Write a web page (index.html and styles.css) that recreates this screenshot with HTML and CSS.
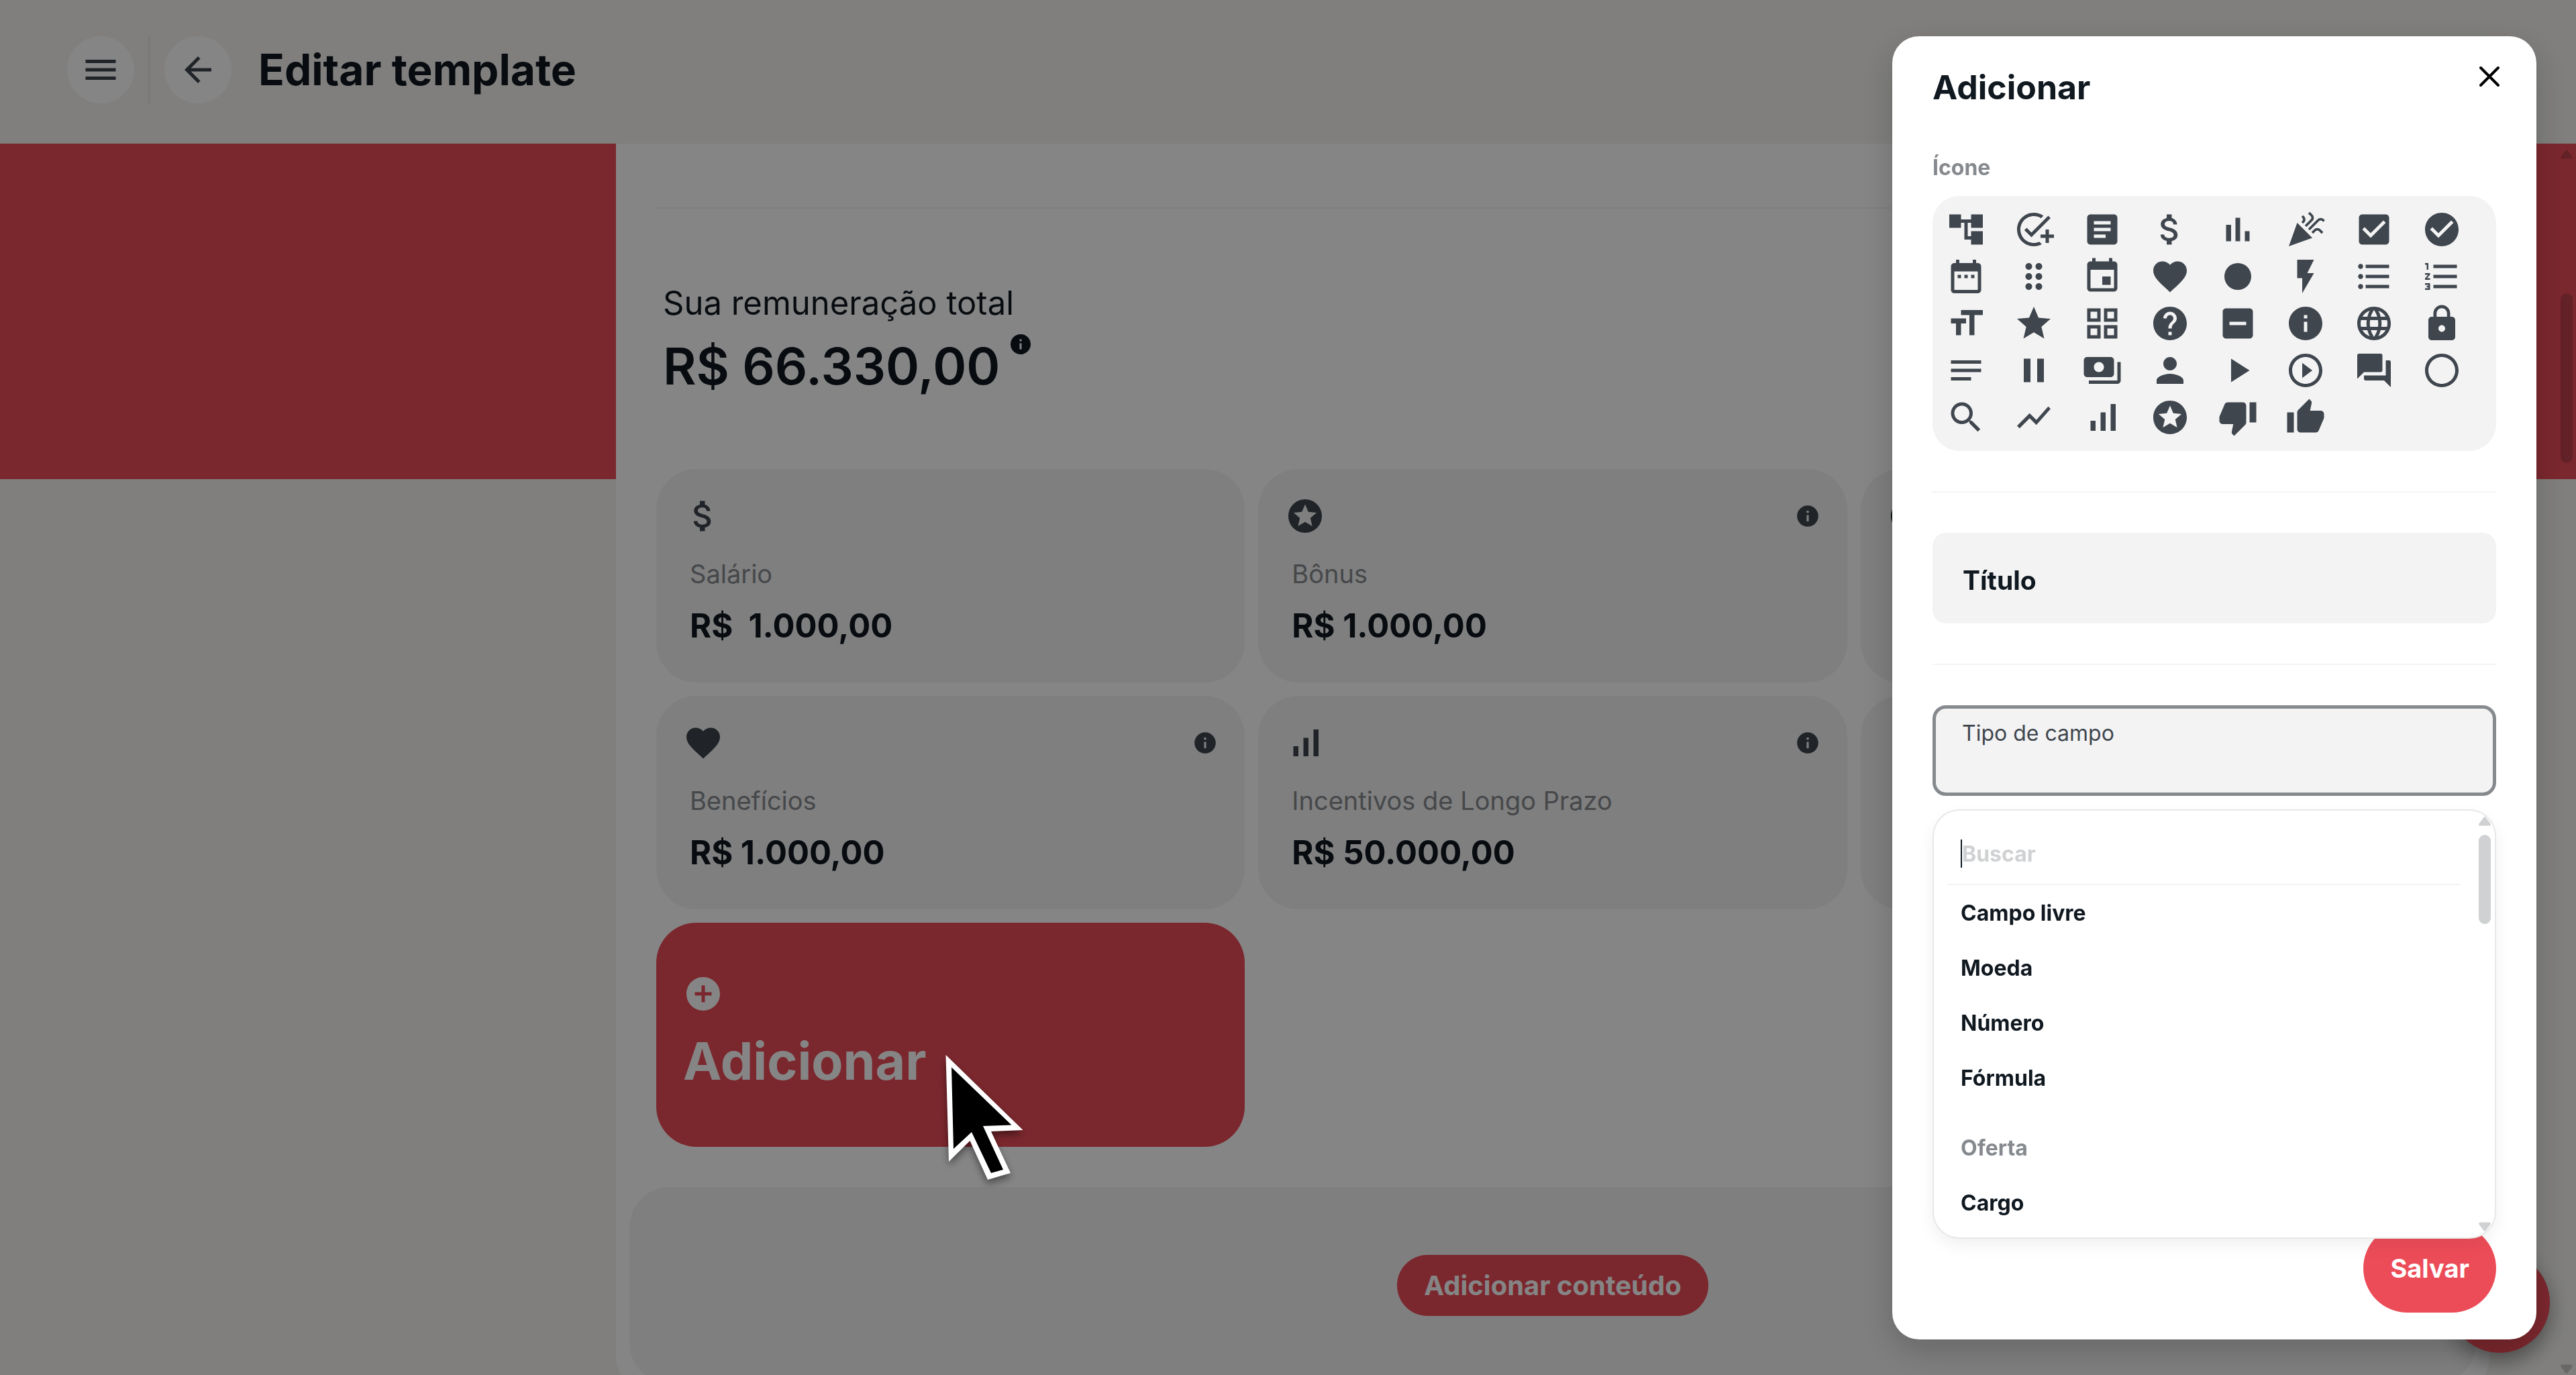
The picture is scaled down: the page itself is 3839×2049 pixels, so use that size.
FILE: index.html
```html
<!DOCTYPE html>
<html lang="pt-BR">
  <head>
    <meta charset="utf-8" />
    <meta name="viewport" content="width=device-width, initial-scale=1" />
    <title>Editar template</title>
    <link rel="stylesheet" href="styles.css" />
  </head>
  <body>
    <!-- icon sprite -->
    <svg class="sprite" aria-hidden="true">
      <symbol id="menu" viewBox="0 0 24 24"><path d="M3 18h18v-2H3v2zm0-5h18v-2H3v2zm0-7v2h18V6H3z" /></symbol>
      <symbol id="back" viewBox="0 0 24 24"><path d="M20 11H7.83l5.59-5.59L12 4l-8 8 8 8 1.41-1.41L7.83 13H20v-2z" /></symbol>
      <symbol id="add-circle" viewBox="0 0 24 24"><path d="M12 2C6.48 2 2 6.48 2 12s4.48 10 10 10 10-4.48 10-10S17.52 2 12 2zm5 11h-4v4h-2v-4H7v-2h4V7h2v4h4v2z" /></symbol>
      <symbol id="tree" viewBox="0 0 24 24"><path d="M22 11V3h-7v3H9V3H2v8h7V8h2v10h4v3h7v-8h-7v3h-2V8h2v3z" /></symbol>
      <symbol id="add-task" viewBox="0 0 24 24"><path d="M22 5.18L10.59 16.6l-4.24-4.24 1.41-1.41 2.83 2.83 10-10L22 5.18zM12 20c-4.41 0-8-3.59-8-8s3.59-8 8-8c1.57 0 3.04.46 4.28 1.25l1.45-1.45C16.1 2.67 14.13 2 12 2 6.48 2 2 6.48 2 12s4.48 10 10 10c1.73 0 3.36-.44 4.78-1.22l-1.5-1.5c-1 .46-2.11.72-3.28.72zm7-5h-3v2h3v3h2v-3h3v-2h-3v-3h-2v3z" /></symbol>
      <symbol id="article" viewBox="0 0 24 24"><path d="M19 3H5c-1.1 0-2 .9-2 2v14c0 1.1.9 2 2 2h14c1.1 0 2-.9 2-2V5c0-1.1-.9-2-2-2zm-5 14H7v-2h7v2zm3-4H7v-2h10v2zm0-4H7V7h10v2z" /></symbol>
      <symbol id="money" viewBox="0 0 24 24"><path d="M11.8 10.9c-2.27-.59-3-1.2-3-2.15 0-1.09 1.01-1.85 2.7-1.85 1.78 0 2.44.85 2.5 2.1h2.21c-.07-1.72-1.12-3.3-3.21-3.81V3h-3v2.16c-1.94.42-3.5 1.68-3.5 3.61 0 2.31 1.91 3.46 4.7 4.13 2.5.6 3 1.48 3 2.41 0 .69-.49 1.79-2.7 1.79-2.06 0-2.87-.92-2.98-2.1h-2.2c.12 2.19 1.76 3.42 3.68 3.83V21h3v-2.15c1.95-.37 3.5-1.5 3.5-3.55 0-2.84-2.43-3.81-4.7-4.4z" /></symbol>
      <symbol id="bars" viewBox="0 0 24 24"><path d="M5 9.2h3V19H5V9.2zM10.6 5h2.8v14h-2.8V5zm5.6 8H19v6h-2.8v-6z" /></symbol>
      <symbol id="party" viewBox="0 0 24 24"><path d="M2 22l14-5-9-9zM14.53 12.53l5.59-5.59c.49-.49 1.28-.49 1.77 0l.59.59 1.06-1.06-.59-.59c-1.07-1.07-2.82-1.07-3.89 0l-5.59 5.59 1.06 1.06zM10.06 6.88l-.59.59 1.06 1.06.59-.59c1.07-1.07 1.07-2.82 0-3.89l-.59-.59-1.06 1.07.59.59c.48.48.48 1.28 0 1.76zM17.06 11.88l-1.59 1.59 1.06 1.06 1.59-1.59c.49-.49 1.28-.49 1.77 0l1.61 1.61 1.06-1.06-1.61-1.61c-1.08-1.07-2.82-1.07-3.89 0zM15.06 5.88l-3.59 3.59 1.06 1.06 3.59-3.59c1.07-1.07 1.07-2.82 0-3.89l-1.59-1.59-1.06 1.06 1.59 1.59c.48.49.48 1.29 0 1.77z" /></symbol>
      <symbol id="check-box" viewBox="0 0 24 24"><path d="M19 3H5c-1.11 0-2 .9-2 2v14c0 1.1.89 2 2 2h14c1.11 0 2-.9 2-2V5c0-1.1-.89-2-2-2zm-9 14l-5-5 1.41-1.41L10 14.17l7.59-7.59L19 8l-9 9z" /></symbol>
      <symbol id="check-circle" viewBox="0 0 24 24"><path d="M12 2C6.48 2 2 6.48 2 12s4.48 10 10 10 10-4.48 10-10S17.52 2 12 2zm-2 15l-5-5 1.41-1.41L10 14.17l7.59-7.59L19 8l-9 9z" /></symbol>
      <symbol id="date-range" viewBox="0 0 24 24"><path d="M9 11H7v2h2v-2zm4 0h-2v2h2v-2zm4 0h-2v2h2v-2zm2-7h-1V2h-2v2H8V2H6v2H5c-1.11 0-1.99.9-1.99 2L3 20c0 1.1.89 2 2 2h14c1.1 0 2-.9 2-2V6c0-1.1-.9-2-2-2zm0 16H5V9h14v11z" /></symbol>
      <symbol id="drag" viewBox="0 0 24 24"><path d="M11 18c0 1.1-.9 2-2 2s-2-.9-2-2 .9-2 2-2 2 .9 2 2zm-2-8c-1.1 0-2 .9-2 2s.9 2 2 2 2-.9 2-2-.9-2-2-2zm0-6c-1.1 0-2 .9-2 2s.9 2 2 2 2-.9 2-2-.9-2-2-2zm6 4c1.1 0 2-.9 2-2s-.9-2-2-2-2 .9-2 2 .9 2 2 2zm0 2c-1.1 0-2 .9-2 2s.9 2 2 2 2-.9 2-2-.9-2-2-2zm0 6c-1.1 0-2 .9-2 2s.9 2 2 2 2-.9 2-2-.9-2-2-2z" /></symbol>
      <symbol id="event" viewBox="0 0 24 24"><path d="M17 12h-5v5h5v-5zM16 1v2H8V1H6v2H5c-1.11 0-1.99.9-1.99 2L3 19c0 1.1.89 2 2 2h14c1.1 0 2-.9 2-2V5c0-1.1-.9-2-2-2h-1V1h-2zm3 18H5V8h14v11z" /></symbol>
      <symbol id="heart" viewBox="0 0 24 24"><path d="M12 21.35l-1.45-1.32C5.4 15.36 2 12.28 2 8.5 2 5.42 4.42 3 7.5 3c1.74 0 3.41.81 4.5 2.09C13.09 3.81 14.76 3 16.5 3 19.58 3 22 5.42 22 8.5c0 3.78-3.4 6.86-8.55 11.54L12 21.35z" /></symbol>
      <symbol id="dot" viewBox="0 0 24 24"><circle cx="12" cy="12" r="8" /></symbol>
      <symbol id="flash" viewBox="0 0 24 24"><path d="M7 2v11h3v9l7-12h-4l4-8z" /></symbol>
      <symbol id="list-bulleted" viewBox="0 0 24 24"><path d="M4 10.5c-.83 0-1.5.67-1.5 1.5s.67 1.5 1.5 1.5 1.5-.67 1.5-1.5-.67-1.5-1.5-1.5zm0-6c-.83 0-1.5.67-1.5 1.5S3.17 7.5 4 7.5 5.5 6.83 5.5 6 4.83 4.5 4 4.5zm0 12c-.83 0-1.5.68-1.5 1.5s.68 1.5 1.5 1.5 1.5-.68 1.5-1.5-.67-1.5-1.5-1.5zM7 19h14v-2H7v2zm0-6h14v-2H7v2zm0-8v2h14V5H7z" /></symbol>
      <symbol id="list-numbered" viewBox="0 0 24 24"><path d="M2 17h2v.5H3v1h1v.5H2v1h3v-4H2v1zm1-9h1V4H2v1h1v3zm-1 3h1.8L2 13.1v.9h3v-1H3.2L5 10.9V10H2v1zm5-6v2h14V5H7zm0 14h14v-2H7v2zm0-6h14v-2H7v2z" /></symbol>
      <symbol id="text-size" viewBox="0 0 24 24"><path d="M9 4v3h5v12h3V7h5V4H9zm-6 8h3v7h3v-7h3V9H3v3z" /></symbol>
      <symbol id="star" viewBox="0 0 24 24"><path d="M12 17.27L18.18 21l-1.64-7.03L22 9.24l-7.19-.61L12 2 9.19 8.63 2 9.24l5.46 4.73L5.82 21z" /></symbol>
      <symbol id="grid" viewBox="0 0 24 24"><path d="M3 3v8h8V3H3zm6 6H5V5h4v4zm-6 4v8h8v-8H3zm6 6H5v-4h4v4zm4-16v8h8V3h-8zm6 6h-4V5h4v4zm-6 4v8h8v-8h-8zm6 6h-4v-4h4v4z" /></symbol>
      <symbol id="help" viewBox="0 0 24 24"><path d="M12 2C6.48 2 2 6.48 2 12s4.48 10 10 10 10-4.48 10-10S17.52 2 12 2zm1 17h-2v-2h2v2zm2.07-7.75l-.9.92C13.45 12.9 13 13.5 13 15h-2v-.5c0-1.1.45-2.1 1.17-2.83l1.24-1.26c.37-.36.59-.86.59-1.41 0-1.1-.9-2-2-2s-2 .9-2 2H8c0-2.21 1.79-4 4-4s4 1.79 4 4c0 .88-.36 1.68-.93 2.25z" /></symbol>
      <symbol id="minus-box" viewBox="0 0 24 24"><path d="M19 3H5c-1.1 0-2 .9-2 2v14c0 1.1.9 2 2 2h14c1.1 0 2-.9 2-2V5c0-1.1-.9-2-2-2zm-2 10H7v-2h10v2z" /></symbol>
      <symbol id="info" viewBox="0 0 24 24"><path d="M12 2C6.48 2 2 6.48 2 12s4.48 10 10 10 10-4.48 10-10S17.52 2 12 2zm1 15h-2v-6h2v6zm0-8h-2V7h2v2z" /></symbol>
      <symbol id="globe" viewBox="0 0 24 24"><path d="M11.99 2C6.47 2 2 6.48 2 12s4.47 10 9.99 10C17.52 22 22 17.52 22 12S17.52 2 11.99 2zm6.93 6h-2.95c-.32-1.25-.78-2.45-1.38-3.56 1.84.63 3.37 1.91 4.33 3.56zM12 4.04c.83 1.2 1.48 2.53 1.91 3.96h-3.82c.43-1.43 1.08-2.76 1.91-3.96zM4.26 14C4.1 13.36 4 12.69 4 12s.1-1.36.26-2h3.38c-.08.66-.14 1.32-.14 2 0 .68.06 1.34.14 2H4.26zm.82 2h2.95c.32 1.25.78 2.45 1.38 3.56-1.84-.63-3.37-1.9-4.33-3.56zm2.95-8H5.08c.96-1.66 2.49-2.93 4.33-3.56C8.81 5.55 8.35 6.75 8.03 8zM12 19.96c-.83-1.2-1.48-2.53-1.91-3.96h3.82c-.43 1.43-1.08 2.76-1.91 3.96zM14.34 14H9.66c-.09-.66-.16-1.32-.16-2 0-.68.07-1.35.16-2h4.68c.09.65.16 1.32.16 2 0 .68-.07 1.34-.16 2zm.25 5.56c.6-1.11 1.06-2.31 1.38-3.56h2.95c-.96 1.65-2.49 2.93-4.33 3.56zM16.36 14c.08-.66.14-1.32.14-2 0-.68-.06-1.34-.14-2h3.38c.16.64.26 1.31.26 2s-.1 1.36-.26 2h-3.38z" /></symbol>
      <symbol id="lock" viewBox="0 0 24 24"><path d="M18 8h-1V6c0-2.76-2.24-5-5-5S7 3.24 7 6v2H6c-1.1 0-2 .9-2 2v10c0 1.1.9 2 2 2h12c1.1 0 2-.9 2-2V10c0-1.1-.9-2-2-2zm-6 9c-1.1 0-2-.9-2-2s.9-2 2-2 2 .9 2 2-.9 2-2 2zm3.1-9H8.9V6c0-1.71 1.39-3.1 3.1-3.1 1.71 0 3.1 1.39 3.1 3.1v2z" /></symbol>
      <symbol id="notes" viewBox="0 0 24 24"><path d="M3 18h12v-2H3v2zM3 6v2h18V6H3zm0 7h18v-2H3v2z" /></symbol>
      <symbol id="pause" viewBox="0 0 24 24"><path d="M6 19h4V5H6v14zm8-14v14h4V5h-4z" /></symbol>
      <symbol id="payments" viewBox="0 0 24 24"><path d="M19 14V6c0-1.1-.9-2-2-2H3c-1.1 0-2 .9-2 2v8c0 1.1.9 2 2 2h14c1.1 0 2-.9 2-2zm-9-1c-1.66 0-3-1.34-3-3s1.34-3 3-3 3 1.34 3 3-1.34 3-3 3zm13-6v11c0 1.1-.9 2-2 2H4v-2h17V7h2z" /></symbol>
      <symbol id="person" viewBox="0 0 24 24"><path d="M12 12c2.21 0 4-1.79 4-4s-1.79-4-4-4-4 1.79-4 4 1.79 4 4 4zm0 2c-2.67 0-8 1.34-8 4v2h16v-2c0-2.66-5.33-4-8-4z" /></symbol>
      <symbol id="play" viewBox="0 0 24 24"><path d="M8 5v14l11-7z" /></symbol>
      <symbol id="play-circle" viewBox="0 0 24 24"><path d="M10 16.5l6-4.5-6-4.5v9zM12 2C6.48 2 2 6.48 2 12s4.48 10 10 10 10-4.48 10-10S17.52 2 12 2zm0 18c-4.41 0-8-3.59-8-8s3.59-8 8-8 8 3.59 8 8-3.59 8-8 8z" /></symbol>
      <symbol id="forum" viewBox="0 0 24 24"><path d="M21 6h-2v9H6v2c0 .55.45 1 1 1h11l4 4V7c0-.55-.45-1-1-1zm-4 6V3c0-.55-.45-1-1-1H3c-.55 0-1 .45-1 1v14l4-4h10c.55 0 1-.45 1-1z" /></symbol>
      <symbol id="ring" viewBox="0 0 24 24"><path d="M12 2C6.48 2 2 6.48 2 12s4.48 10 10 10 10-4.48 10-10S17.52 2 12 2zm0 18c-4.42 0-8-3.58-8-8s3.58-8 8-8 8 3.58 8 8-3.58 8-8 8z" /></symbol>
      <symbol id="search" viewBox="0 0 24 24"><path d="M15.5 14h-.79l-.28-.27C15.41 12.59 16 11.11 16 9.5 16 5.91 13.09 3 9.5 3S3 5.91 3 9.5 5.91 16 9.5 16c1.61 0 3.09-.59 4.23-1.57l.27.28v.79l5 4.99L20.49 19l-4.99-5zm-6 0C7.01 14 5 11.99 5 9.5S7.01 5 9.5 5 14 7.01 14 9.5 11.99 14 9.5 14z" /></symbol>
      <symbol id="chart-line" viewBox="0 0 24 24"><path d="M3.5 18.49l6-6.01 4 4L22 6.92l-1.41-1.41-7.09 7.97-4-4L2 16.99z" /></symbol>
      <symbol id="signal" viewBox="0 0 24 24"><path d="M17 4h3v16h-3zM5 14h3v6H5zm6-5h3v11h-3z" /></symbol>
      <symbol id="stars" viewBox="0 0 24 24"><path d="M11.99 2C6.47 2 2 6.48 2 12s4.47 10 9.99 10C17.52 22 22 17.52 22 12S17.52 2 11.99 2zm4.24 16L12 15.45 7.77 18l1.12-4.81-3.73-3.23 4.92-.42L12 5l1.92 4.53 4.92.42-3.73 3.23L16.23 18z" /></symbol>
      <symbol id="thumb-down" viewBox="0 0 24 24"><path d="M15 3H6c-.83 0-1.54.5-1.84 1.22l-3.02 7.05c-.09.23-.14.47-.14.73v2c0 1.1.9 2 2 2h6.31l-.95 4.57-.03.32c0 .41.17.79.44 1.06L9.83 23l6.59-6.59c.36-.36.58-.86.58-1.41V5c0-1.1-.9-2-2-2zm4 0v12h4V3h-4z" /></symbol>
      <symbol id="thumb-up" viewBox="0 0 24 24"><path d="M1 21h4V9H1v12zm22-11c0-1.1-.9-2-2-2h-6.31l.95-4.57.03-.32c0-.41-.17-.79-.44-1.06L14.17 1 7.59 7.59C7.22 7.95 7 8.45 7 9v10c0 1.1.9 2 2 2h9c.83 0 1.54-.5 1.84-1.22l3.02-7.05c.09-.23.14-.47.14-.73v-2z" /></symbol>
      <symbol id="arrow" viewBox="0 0 18 14"><path d="M7.4 1.2q1.6-2 3.2 0l6.8 9q1.4 3-1.4 3.400H2q-2.800-.4-1.400-3.400z" /></symbol>
    </svg>

    <header class="topbar">
      <button class="round-btn" aria-label="Menu"><svg class="icon"><use href="#menu" /></svg></button>
      <span class="topbar-divider"></span>
      <button class="round-btn" aria-label="Voltar"><svg class="icon"><use href="#back" /></svg></button>
      <h1>Editar template</h1>
    </header>

    <main class="canvas">
      <div class="panel">
        <hr class="rule" />
        <div class="total">
          <p class="total-label">Sua remuneração total</p>
          <p class="total-value">R$ 66.330,00 <svg class="icon-xs"><use href="#info" /></svg></p>
        </div>

        <div class="cards">
          <article class="card">
            <div class="card-head"><svg class="icon"><use href="#money" /></svg></div>
            <p class="card-label">Salário</p>
            <p class="card-value">R$&nbsp; 1.000,00</p>
          </article>
          <article class="card">
            <div class="card-head">
              <svg class="icon"><use href="#stars" /></svg>
              <svg class="icon-sm"><use href="#info" /></svg>
            </div>
            <p class="card-label">Bônus</p>
            <p class="card-value">R$ 1.000,00</p>
          </article>
          <article class="card">
            <div class="card-head dark"><svg class="icon"><use href="#dot" /><use href="#ring" /></svg></div>
          </article>
          <article class="card">
            <div class="card-head">
              <svg class="icon"><use href="#heart" /></svg>
              <svg class="icon-sm"><use href="#info" /></svg>
            </div>
            <p class="card-label">Benefícios</p>
            <p class="card-value">R$ 1.000,00</p>
          </article>
          <article class="card">
            <div class="card-head">
              <svg class="icon"><use href="#signal" /></svg>
              <svg class="icon-sm"><use href="#info" /></svg>
            </div>
            <p class="card-label">Incentivos de Longo Prazo</p>
            <p class="card-value">R$ 50.000,00</p>
          </article>
          <article class="card"></article>
          <button class="card-add">
            <svg class="icon"><use href="#add-circle" /></svg>
            Adicionar
          </button>
        </div>

        <section class="content-slot">
          <button class="btn-content">Adicionar conteúdo</button>
        </section>
      </div>

      <div class="page-scroll" aria-hidden="true">
        <svg class="scroll-arrow"><use href="#arrow" /></svg>
        <span class="page-thumb"></span>
        <svg class="scroll-arrow down"><use href="#arrow" /></svg>
      </div>
    </main>

    <button class="fab" aria-label="Ações"></button>

    <div class="backdrop"></div>

    <div class="modal" role="dialog" aria-labelledby="modal-title">
      <div class="modal-head">
        <h2 id="modal-title">Adicionar</h2>
        <button class="close" aria-label="Fechar">
          <svg viewBox="0 0 40 40"><path d="M7 7l26 26M33 7L7 33" /></svg>
        </button>
      </div>

      <p class="group-label">Ícone</p>
      <div class="icon-grid" id="icon-grid"></div>

      <hr class="rule" />
      <input class="field title-field" type="text" placeholder="Título" aria-label="Título" />
      <hr class="rule" />

      <div class="select-wrap">
        <div class="field select-field">
          <label for="field-type">Tipo de campo</label>
          <select id="field-type"><option value=""></option></select>
        </div>

        <div class="dropdown">
          <div class="search-row">
            <input type="text" placeholder="Buscar" aria-label="Buscar" />
          </div>
          <ul>
            <li>Campo livre</li>
            <li>Moeda</li>
            <li>Número</li>
            <li>Fórmula</li>
            <li class="heading">Oferta</li>
            <li>Cargo</li>
          </ul>
          <div class="dropdown-scroll" aria-hidden="true">
            <svg class="scroll-arrow"><use href="#arrow" /></svg>
            <span class="dropdown-thumb"></span>
            <svg class="scroll-arrow down"><use href="#arrow" /></svg>
          </div>
        </div>
      </div>

      <button class="btn-save">Salvar</button>
    </div>

    <svg class="cursor" viewBox="0 0 130 200" aria-hidden="true">
      <path class="cursor-edge" d="M9.500 12L124.500 124L77 126L106 188L72 198L45.500 140L14 171z" />
      <path d="M18 30.500L107.500 116.400L65 118L95 183L77 188L48 127L21 152z" />
    </svg>

    <script>
      const icons = [
        "tree", "add-task", "article", "money", "bars", "party", "check-box", "check-circle",
        "date-range", "drag", "event", "heart", "dot", "flash", "list-bulleted", "list-numbered",
        "text-size", "star", "grid", "help", "minus-box", "info", "globe", "lock",
        "notes", "pause", "payments", "person", "play", "play-circle", "forum", "ring",
        "search", "chart-line", "signal", "stars", "thumb-down", "thumb-up",
      ];

      document.getElementById("icon-grid").innerHTML = icons
        .map(
          (name) =>
            `<button aria-label="${name}"><svg class="icon"><use href="#${name}" /></svg></button>`
        )
        .join("");
    </script>
  </body>
</html>
```
FILE: styles.css
```css
:root {
  --red: #ec4c58;
  --ink: #101820;
  --icon: #3f464e;
  --muted: #868a8e;
  --soft: #f3f3f3;
  --line: #f3f3f3;
}

* {
  box-sizing: border-box;
}

html,
body {
  height: 100%;
  margin: 0;
}

body {
  display: flex;
  flex-direction: column;
  overflow: hidden;
  background: #f5f4f1;
  color: var(--ink);
  font-family: "Inter", "Liberation Sans", sans-serif;
  font-size: 32px;
}

h1,
h2,
p,
ul {
  margin: 0;
  padding: 0;
}

ul {
  list-style: none;
}

button,
input,
select {
  margin: 0;
  padding: 0;
  border: 0;
  background: none;
  color: inherit;
  font: inherit;
}

svg {
  display: block;
  fill: currentColor;
}

.sprite {
  position: absolute;
  width: 0;
  height: 0;
}

.icon {
  width: 60px;
  height: 60px;
}

.icon-sm {
  width: 38px;
  height: 38px;
}

.icon-xs {
  width: 36px;
  height: 36px;
}

.rule {
  width: 100%;
  height: 2px;
  margin: 0;
  border: 0;
  background: var(--line);
}

/* top bar */

.topbar {
  display: flex;
  flex: none;
  align-items: center;
  gap: 20px;
  height: 214px;
  padding: 0 100px 6px;
}

.topbar h1 {
  margin-left: 20px;
  font-size: 64px;
  font-weight: 700;
  line-height: 80px;
}

.topbar-divider {
  width: 5px;
  height: 100px;
  background: #ebeae8;
}

.round-btn {
  display: flex;
  align-items: center;
  justify-content: center;
  width: 100px;
  height: 100px;
  border-radius: 50%;
  background: #fff;
  color: var(--icon);
}

/* template canvas */

.canvas {
  position: relative;
  flex: 1;
  min-height: 0;
  overflow: hidden;
  padding: 0 129px 0 918px;
  background: linear-gradient(var(--red) 500px, transparent 500px);
}

.panel {
  padding: 95px 60px 20px;
  border-radius: 0 0 60px 60px;
  background: #fff;
}

.total {
  padding: 111px 10px 104px;
}

.total-label {
  font-size: 49px;
  font-weight: 400;
  line-height: 60px;
}

.total-value {
  display: flex;
  gap: 12px;
  margin-top: 13px;
  font-size: 76px;
  font-weight: 600;
  line-height: 100px;
}

.cards {
  display: grid;
  grid-template-columns: repeat(3, 1fr);
  gap: 20px;
}

.card,
.card-add {
  border-radius: 60px;
}

.card {
  min-height: 318px;
  padding: 40px 40px 54px;
  background: var(--soft);
}

.card-head {
  display: flex;
  align-items: center;
  justify-content: space-between;
  color: var(--icon);
}

.card-head.dark {
  color: var(--ink);
}

.card-label,
.card-value {
  padding-left: 10px;
}

.card-label {
  margin-top: 28px;
  color: var(--muted);
  font-size: 38px;
  font-weight: 400;
  line-height: 56px;
}

.card-value {
  margin-top: 20px;
  font-size: 49px;
  font-weight: 700;
  line-height: 60px;
}

.card-add {
  display: flex;
  flex-direction: column;
  align-items: flex-start;
  gap: 30px;
  padding: 76px 40px 88px;
  background: var(--red);
  color: #fff;
  font-size: 77px;
  font-weight: 700;
  line-height: 80px;
}

.content-slot {
  display: flex;
  align-items: center;
  justify-content: center;
  height: 292px;
  margin: 60px -40px 0;
  border-radius: 60px;
  background: var(--soft);
}

.btn-content {
  padding: 0 40px;
  border-radius: 46px;
  background: var(--red);
  color: #fff;
  font-size: 40px;
  font-weight: 700;
  line-height: 91px;
}

/* scrollbars */

.page-scroll,
.dropdown-scroll {
  position: absolute;
  display: flex;
  flex-direction: column;
  color: rgba(16, 24, 32, 0.2);
}

.page-scroll {
  top: 9px;
  right: 5px;
  bottom: 2px;
}

.dropdown-scroll {
  top: 9px;
  right: 6px;
  bottom: 9px;
}

.scroll-arrow {
  width: 18px;
  height: 14px;
}

.scroll-arrow.down {
  margin-top: auto;
  transform: rotate(180deg);
}

.page-thumb,
.dropdown-thumb {
  width: 18px;
  border-radius: 9px;
  background: currentColor;
}

.page-thumb {
  height: 253px;
  margin-top: 200px;
}

.dropdown-thumb {
  height: 133px;
  margin-top: 13px;
}

.fab {
  position: fixed;
  right: 39px;
  bottom: 33px;
  width: 150px;
  height: 150px;
  border-radius: 50%;
  background: var(--red);
  box-shadow: 0 12px 30px rgba(0, 0, 0, 0.35);
}

.backdrop {
  position: fixed;
  inset: 0;
  background: rgba(0, 0, 0, 0.48);
}

/* modal */

.modal {
  position: fixed;
  top: 54px;
  right: 59px;
  bottom: 53px;
  display: flex;
  flex-direction: column;
  width: 960px;
  padding: 40px 60px;
  border-radius: 40px;
  background: #fff;
  box-shadow: 0 16px 50px rgba(0, 0, 0, 0.2);
}

.modal-head {
  display: flex;
  align-items: flex-start;
  justify-content: space-between;
}

.modal-head h2 {
  padding-top: 6px;
  font-size: 50px;
  font-weight: 700;
  line-height: 60px;
}

.close {
  width: 40px;
  height: 40px;
  margin-right: -10px;
}

.close svg {
  fill: none;
  stroke: #000;
  stroke-width: 4;
  stroke-linecap: round;
}

.group-label {
  margin: 70px 0 22px;
  color: var(--muted);
  font-weight: 700;
  line-height: 40px;
}

.icon-grid {
  display: grid;
  grid-template-columns: repeat(8, 1fr);
  padding: 15px 15px 10px;
  min-height: 380px;
  align-content: start;
  border-radius: 40px;
  background: var(--soft);
  color: var(--icon);
}

.icon-grid button {
  height: 70px;
  padding: 5px;
}

.modal .rule {
  margin: 60px 0;
}

.field {
  width: 100%;
  height: 135px;
  border-radius: 20px;
  background: var(--soft);
}

.title-field {
  padding: 6px 45px 0;
  font-size: 39px;
  font-weight: 700;
}

.title-field::placeholder {
  color: var(--ink);
  opacity: 1;
}

.select-wrap {
  position: relative;
}

.select-field {
  display: flex;
  flex-direction: column;
  padding: 17px 39px;
  border: 5px solid var(--muted);
  color: var(--icon);
}

.select-field label {
  line-height: 40px;
}

.select-field select {
  flex: 1;
  appearance: none;
  outline: 0;
}

.dropdown {
  position: absolute;
  z-index: 1;
  top: 155px;
  left: 0;
  right: 0;
  height: 640px;
  padding: 0 51px 0 20px;
  border: 2px solid #e7e8e9;
  border-radius: 40px;
  background: #fff;
  box-shadow: 0 10px 24px rgba(0, 0, 0, 0.06);
  font-weight: 700;
}

.search-row {
  padding: 43px 20px 24px;
  border-bottom: 2px solid var(--line);
}

/* left border doubles as the text caret */
.search-row input {
  display: block;
  width: 100%;
  height: 42px;
  border-left: 2px solid var(--ink);
}

.search-row input::placeholder {
  color: #cfd1d3;
  opacity: 1;
}

.dropdown ul {
  padding-top: 1px;
}

.dropdown li {
  padding-left: 20px;
  line-height: 82px;
}

.dropdown .heading {
  margin-top: 22px;
  color: var(--muted);
}

.btn-save {
  align-self: flex-end;
  margin-top: auto;
  padding: 0 40px;
  border-radius: 66px;
  background: var(--red);
  color: #fff;
  font-size: 38px;
  font-weight: 700;
  line-height: 132px;
}

/* mouse pointer */

.cursor {
  position: fixed;
  left: 1400px;
  top: 1560px;
  width: 130px;
  height: 200px;
  overflow: visible;
  fill: #000;
  filter: drop-shadow(0 6px 6px rgba(0, 0, 0, 0.45));
}

.cursor-edge {
  fill: #fff;
}
```
